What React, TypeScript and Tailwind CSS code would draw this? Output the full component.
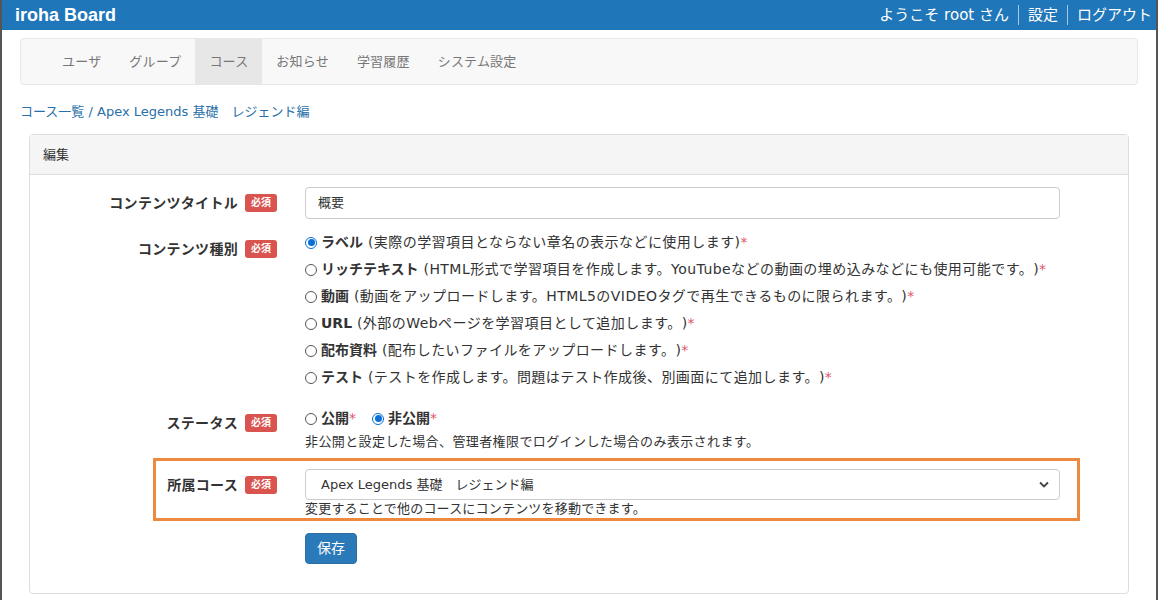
import React from 'react';

const Badge: React.FC = () => (
  <span className="inline-flex items-center justify-center w-[32px] h-[18px] rounded-[3px] bg-[#d9534f] text-white text-[10px] font-bold leading-none">
    必須
  </span>
);

const Radio: React.FC<{ checked?: boolean }> = ({ checked }) =>
  checked ? (
    <span className="inline-flex items-center justify-center w-[12px] h-[12px] rounded-full border border-[#0a6fd6] bg-white mr-[4px] shrink-0">
      <span className="w-[7px] h-[7px] rounded-full bg-[#0a6fd6]" />
    </span>
  ) : (
    <span className="inline-block w-[12px] h-[12px] rounded-full border border-[#555] bg-white mr-[4px] shrink-0" />
  );

const Star = () => <span className="text-[#e0566a]">*</span>;

const contentTypes = [
  { name: 'ラベル', desc: '(実際の学習項目とならない章名の表示などに使用します)', checked: true },
  { name: 'リッチテキスト', desc: '(HTML形式で学習項目を作成します。YouTubeなどの動画の埋め込みなどにも使用可能です。)' },
  { name: '動画', desc: '(動画をアップロードします。HTML5のVIDEOタグで再生できるものに限られます。)' },
  { name: 'URL', desc: '(外部のWebページを学習項目として追加します。)' },
  { name: '配布資料', desc: '(配布したいファイルをアップロードします。)' },
  { name: 'テスト', desc: '(テストを作成します。問題はテスト作成後、別画面にて追加します。)' },
];

const navItems = ['ユーザ', 'グループ', 'コース', 'お知らせ', '学習履歴', 'システム設定'];

const Label: React.FC<{ text: string; className?: string }> = ({ text, className }) => (
  <div className={`flex justify-end items-center gap-[7px] shrink-0 ${className ?? ''}`}>
    <span className="text-[14px] font-bold text-[#333] leading-[20px] tracking-[0.3px]">{text}</span>
    <Badge />
  </div>
);

const App: React.FC = () => {
  return (
    <div className="w-[1158px] h-[600px] overflow-hidden bg-white font-['DejaVu_Sans','Noto_Sans_CJK_JP',sans-serif] [text-spacing-trim:space-all] text-[#333] border-l-2 border-r-2 border-[#555]">
      {/* Header */}
      <header className="h-[30px] bg-[#1f76b8] flex items-center justify-between pl-[13px] pr-[4px] text-white">
        <span className="font-['Liberation_Sans','Noto_Sans_CJK_JP',sans-serif] font-bold text-[18px] leading-none">
          iroha Board
        </span>
        <div className="flex items-center text-[15px] leading-none">
          <span className="px-[9px]">ようこそ root さん</span>
          <span className="w-px h-[20px] bg-white/60" />
          <span className="px-[9px]">設定</span>
          <span className="w-px h-[20px] bg-white/60" />
          <span className="pl-[9px]">ログアウト</span>
        </div>
      </header>

      <div className="px-[18px]">
        {/* Nav */}
        <nav className="mt-[8px] h-[47px] bg-[#f8f8f8] border border-[#e7e7e7] rounded-[4px] flex pl-[27px]">
          {navItems.map((item) => (
            <div
              key={item}
              className={`px-[14px] flex items-center text-[13px] tracking-[0.2px] text-[#777] ${item === 'コース' ? 'bg-[#e7e7e7] text-[#555]' : ''}`}
            >
              {item}
            </div>
          ))}
        </nav>

        {/* Breadcrumb */}
        <div className="mt-[17px] text-[13px] leading-[20px] text-[#2a6fa8]">
          コース一覧 / Apex Legends 基礎　レジェンド編
        </div>

        {/* Panel */}
        <div className="mt-[12px] mx-[9px] border border-[#ddd] rounded-[4px]">
          <div className="h-[40px] bg-[#f5f5f5] border-b border-[#ddd] flex items-center pl-[13px] text-[13px] text-[#333]">
            編集
          </div>

          <div className="pt-[12px] pb-[29px]">
            {/* Title */}
            <div className="flex items-center">
              <Label text="コンテンツタイトル" className="w-[247px]" />
              <div className="ml-[28px] w-[755px] h-[32px] border border-[#ccc] rounded-[4px] flex items-center pl-[12px] text-[13px]">
                概要
              </div>
            </div>

            {/* Content type */}
            <div className="flex mt-[10px]">
              <Label text="コンテンツ種別" className="w-[247px] h-[20px] mt-[10px]" />
              <div className="ml-[28px] flex flex-col">
                {contentTypes.map((t) => (
                  <div key={t.name} className="h-[27px] flex items-center text-[14px] whitespace-pre">
                    <Radio checked={t.checked} />
                    <span className="font-bold">{t.name} </span>
                    <span className="tracking-[0.45px]">{t.desc}</span>
                    <Star />
                  </div>
                ))}
              </div>
            </div>

            {/* Status */}
            <div className="flex mt-[14px]">
              <Label text="ステータス" className="w-[247px] h-[20px] mt-[8px]" />
              <div className="ml-[28px] flex flex-col">
                <div className="h-[27px] flex items-center text-[14px]">
                  <Radio />
                  <span className="font-bold">公開</span>
                  <Star />
                  <span className="w-[16px]" />
                  <Radio checked />
                  <span className="font-bold">非公開</span>
                  <Star />
                </div>
                <div className="text-[13px] leading-[20px] tracking-[0.4px]">
                  非公開と設定した場合、管理者権限でログインした場合のみ表示されます。
                </div>
              </div>
            </div>

            {/* Course (highlighted) */}
            <div className="mt-[6px] ml-[123px] w-[927px] border-[3px] border-[#ed8a3f] pt-[8px] flex">
              <Label text="所属コース" className="w-[121px] h-[31px]" />
              <div className="ml-[28px] w-[755px] flex flex-col">
                <div className="h-[31px] border border-[#ccc] rounded-[4px] flex items-center justify-between pl-[15px] pr-[10px] text-[13px]">
                  <span>Apex Legends 基礎　レジェンド編</span>
                  <svg width="10" height="7" viewBox="0 0 10 7" fill="none">
                    <path d="M1 1.5 L5 5.5 L9 1.5" stroke="#444" strokeWidth="1.8" />
                  </svg>
                </div>
                <div className="text-[13px] leading-[18px] tracking-[0.2px]">
                  変更することで他のコースにコンテンツを移動できます。
                </div>
              </div>
            </div>

            {/* Save */}
            <div className="mt-[12px] pl-[275px]">
              <button className="w-[52px] h-[31px] bg-[#2a79b8] border border-[#2e6da4] rounded-[4px] text-white text-[14px]">
                保存
              </button>
            </div>
          </div>
        </div>
      </div>
    </div>
  );
};

export default App;
